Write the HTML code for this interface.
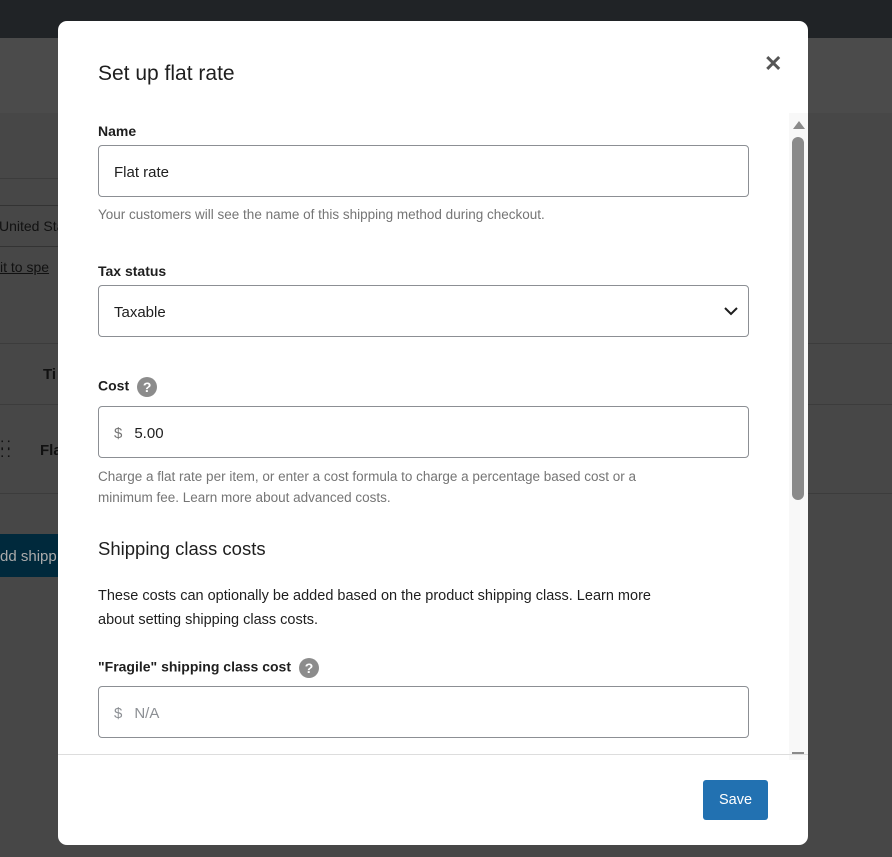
<!DOCTYPE html>
<html><head><style>
*{box-sizing:border-box;margin:0;padding:0}
body{width:892px;height:857px;overflow:hidden;background:#474747;font-family:"Liberation Sans",sans-serif;position:relative;color:#1e1e1e}
.abs{position:absolute;white-space:nowrap}
.modal{position:absolute;left:58px;top:21px;width:750px;height:824px;background:#fff;border-radius:9px;overflow:hidden}
.lbl{position:absolute;left:40px;font-size:14px;font-weight:bold;color:#1e1e1e}
.inp{position:absolute;left:40px;width:651px;height:52px;border:1px solid #8c8f94;border-radius:4px;font-size:15px;padding:2px 15px 0;line-height:50px;color:#1e1e1e}
.help{position:absolute;left:40px;font-size:13.5px;color:#757575;line-height:21px;white-space:nowrap}
.q{display:inline-block;width:20px;height:20px;border-radius:50%;background:#8c8c8c;color:#fff;font-size:14px;font-weight:bold;text-align:center;line-height:20px;vertical-align:middle;margin-left:8px}
</style></head><body>
<div class="abs" style="left:0;top:0;width:892px;height:38px;background:#202326"></div>
<div class="abs" style="left:0;top:38px;width:892px;height:75px;background:#4b4b4b"></div>
<div class="abs" style="left:0;top:178px;width:60px;height:1px;background:#3c3c3c"></div>
<div class="abs" style="left:-4px;top:205px;width:64px;height:42px;border:1px solid #333;border-radius:3px;font-size:14px;line-height:40px;padding-left:2px;color:#111;overflow:hidden">United Sta</div>
<div class="abs" style="left:0;top:259px;font-size:14px;text-decoration:underline;color:#111">it to spe</div>
<div class="abs" style="left:0;top:343px;width:892px;height:1px;background:#3c3c3c"></div>
<div class="abs" style="left:43px;top:366px;font-size:15px;font-weight:bold;color:#111">Ti</div>
<div class="abs" style="left:0;top:404px;width:892px;height:1px;background:#3c3c3c"></div>
<div class="abs" style="left:0;top:441px;font-size:16px;color:#111;letter-spacing:2px;line-height:8px;white-space:normal">::<br>::</div>
<div class="abs" style="left:40px;top:442px;font-size:15px;font-weight:bold;color:#111">Fla</div>
<div class="abs" style="left:0;top:493px;width:892px;height:1px;background:#3c3c3c"></div>
<div class="abs" style="left:0;top:534px;width:60px;height:43px;background:#00293c;color:#aaa;font-size:15px;line-height:45px;overflow:hidden">dd shipp</div>

<div class="modal">
<div class="abs" style="left:40px;top:41px;font-size:21px;color:#1e1e1e">Set up flat rate</div>
<div class="abs" style="left:706px;top:30px;font-size:22px;color:#555;font-weight:bold">✕</div>
<div class="abs" style="left:731px;top:92px;width:19px;height:647px;background:#f8f8f8"></div>
<div class="abs" style="left:735px;top:100px;width:0;height:0;border-left:6px solid transparent;border-right:6px solid transparent;border-bottom:8px solid #8a8a8a"></div>
<div class="abs" style="left:734px;top:116px;width:12px;height:363px;border-radius:6px;background:#8a8a8a"></div>
<div class="abs" style="left:734px;top:731px;width:12px;height:3px;background:#8a8a8a"></div>
<div class="lbl" style="top:102px">Name</div>
<div class="inp" style="top:124px">Flat rate</div>
<div class="help" style="top:183px">Your customers will see the name of this shipping method during checkout.</div>
<div class="lbl" style="top:242px">Tax status</div>
<div class="inp" style="top:264px">Taxable
<svg class="abs" style="right:10px;top:20px" width="14" height="10" viewBox="0 0 14 10"><path d="M1 2l6 6 6-6" stroke="#1e1e1e" stroke-width="2" fill="none"/></svg></div>
<div class="lbl" style="top:356px">Cost<span class="q">?</span></div>
<div class="inp" style="top:385px"><span style="color:#757575;margin-right:12px">$</span>5.00</div>
<div class="help" style="top:445px">Charge a flat rate per item, or enter a cost formula to charge a percentage based cost or a<br>minimum fee. Learn more about advanced costs.</div>
<div class="abs" style="left:40px;top:517px;font-size:18.5px;color:#1e1e1e">Shipping class costs</div>
<div class="abs" style="left:40px;top:563px;font-size:14.5px;line-height:24px;color:#1e1e1e">These costs can optionally be added based on the product shipping class. Learn more<br>about setting shipping class costs.</div>
<div class="lbl" style="top:637px">"Fragile" shipping class cost<span class="q">?</span></div>
<div class="inp" style="top:665px;color:#8c8f94"><span style="margin-right:12px">$</span>N/A</div>
<div class="abs" style="left:0;top:733px;width:750px;height:1px;background:#ddd"></div>
<div class="abs" style="left:645px;top:759px;width:65px;height:40px;background:#2271b1;border-radius:3px;color:#fff;font-size:14.5px;text-align:center;line-height:41px">Save</div>
</div>
</body></html>
